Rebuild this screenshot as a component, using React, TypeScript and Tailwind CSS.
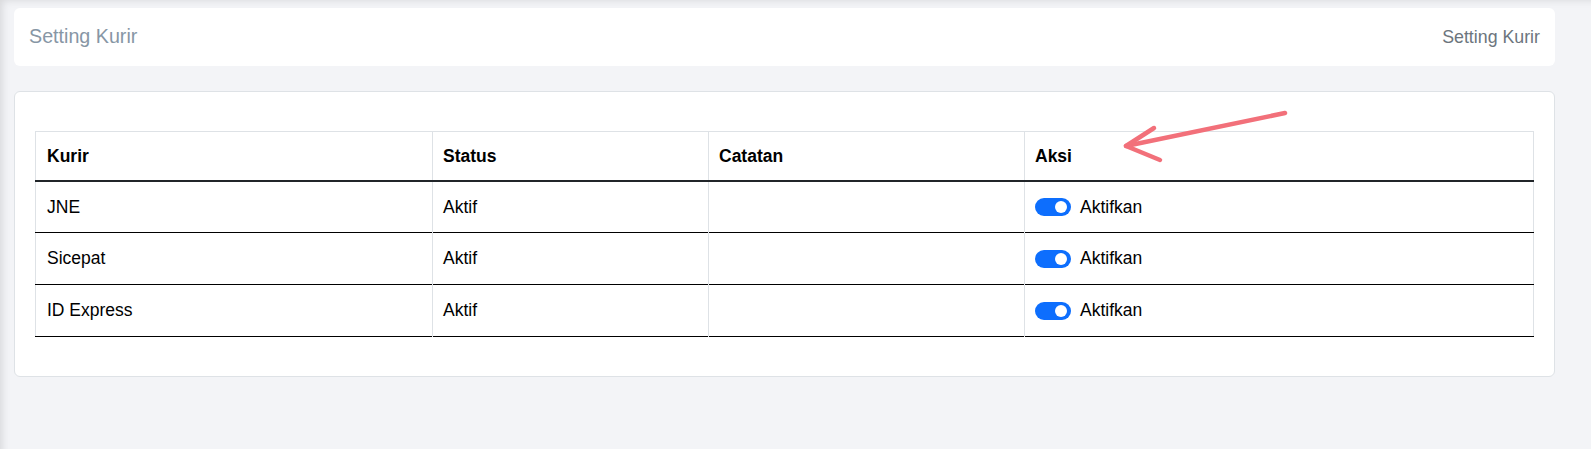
const couriers = [
  { name: "JNE", status: "Aktif", note: "" },
  { name: "Sicepat", status: "Aktif", note: "" },
  { name: "ID Express", status: "Aktif", note: "" },
];

const Toggle = () => (
  <span className="relative inline-block h-[18px] w-[36px] shrink-0 rounded-full bg-[#0d6efd]">
    <span className="absolute right-[4px] top-[3px] h-[12px] w-[12px] rounded-full bg-white" />
  </span>
);

const App = () => {
  return (
    <div
      className="relative min-h-[449px] bg-[#f3f4f7] pt-[8px] pl-[14px] pr-[36px] shadow-[inset_8px_6px_8px_-6px_rgba(0,0,0,0.12)]"
      style={{ fontFamily: '"Liberation Sans", Arial, sans-serif' }}
    >
      {/* Page header */}
      <div className="flex h-[58px] items-center justify-between rounded-md bg-white px-[15px]">
        <span className="text-[19.7px] text-[#8796a5]">Setting Kurir</span>
        <span className="text-[17.8px] text-[#6c757d]">Setting Kurir</span>
      </div>

      {/* Table card */}
      <div className="mt-[25px] rounded-md border border-[#dee2e6] bg-white px-[20px] pt-[39px] pb-[39px]">
        <table className="w-full border-collapse text-[17.5px] text-black">
          <thead>
            <tr className="border-x border-t border-[#dee2e6]">
              <th className="h-[49px] w-[397px] border-r border-[#dee2e6] px-[11px] text-left font-bold">Kurir</th>
              <th className="w-[276px] border-r border-[#dee2e6] px-[10px] text-left font-bold">Status</th>
              <th className="w-[316px] border-r border-[#dee2e6] px-[10px] text-left font-bold">Catatan</th>
              <th className="px-[10px] text-left font-bold">Aksi</th>
            </tr>
          </thead>
          <tbody className="border-t-2 border-[#212529]">
            {couriers.map((c) => (
              <tr key={c.name} className="border-b border-x border-b-black border-x-[#dee2e6]">
                <td className="h-[52px] border-r border-[#dee2e6] px-[11px]">{c.name}</td>
                <td className="border-r border-[#dee2e6] px-[10px]">{c.status}</td>
                <td className="border-r border-[#dee2e6] px-[10px]">{c.note}</td>
                <td className="px-[10px]">
                  <div className="flex items-center gap-[9px]">
                    <Toggle />
                    <span>Aktifkan</span>
                  </div>
                </td>
              </tr>
            ))}
          </tbody>
        </table>
      </div>

      {/* Annotation arrow */}
      <svg
        className="pointer-events-none absolute left-[1118px] top-[106px]"
        width="175"
        height="62"
        viewBox="0 0 175 62"
        fill="none"
        stroke="#f2707a"
        strokeWidth="4.5"
        strokeLinecap="round"
        strokeLinejoin="round"
      >
        <path d="M167 7 L8 40" />
        <path d="M36 22 L8 40 L42 54" />
      </svg>
    </div>
  );
};

export default App;
